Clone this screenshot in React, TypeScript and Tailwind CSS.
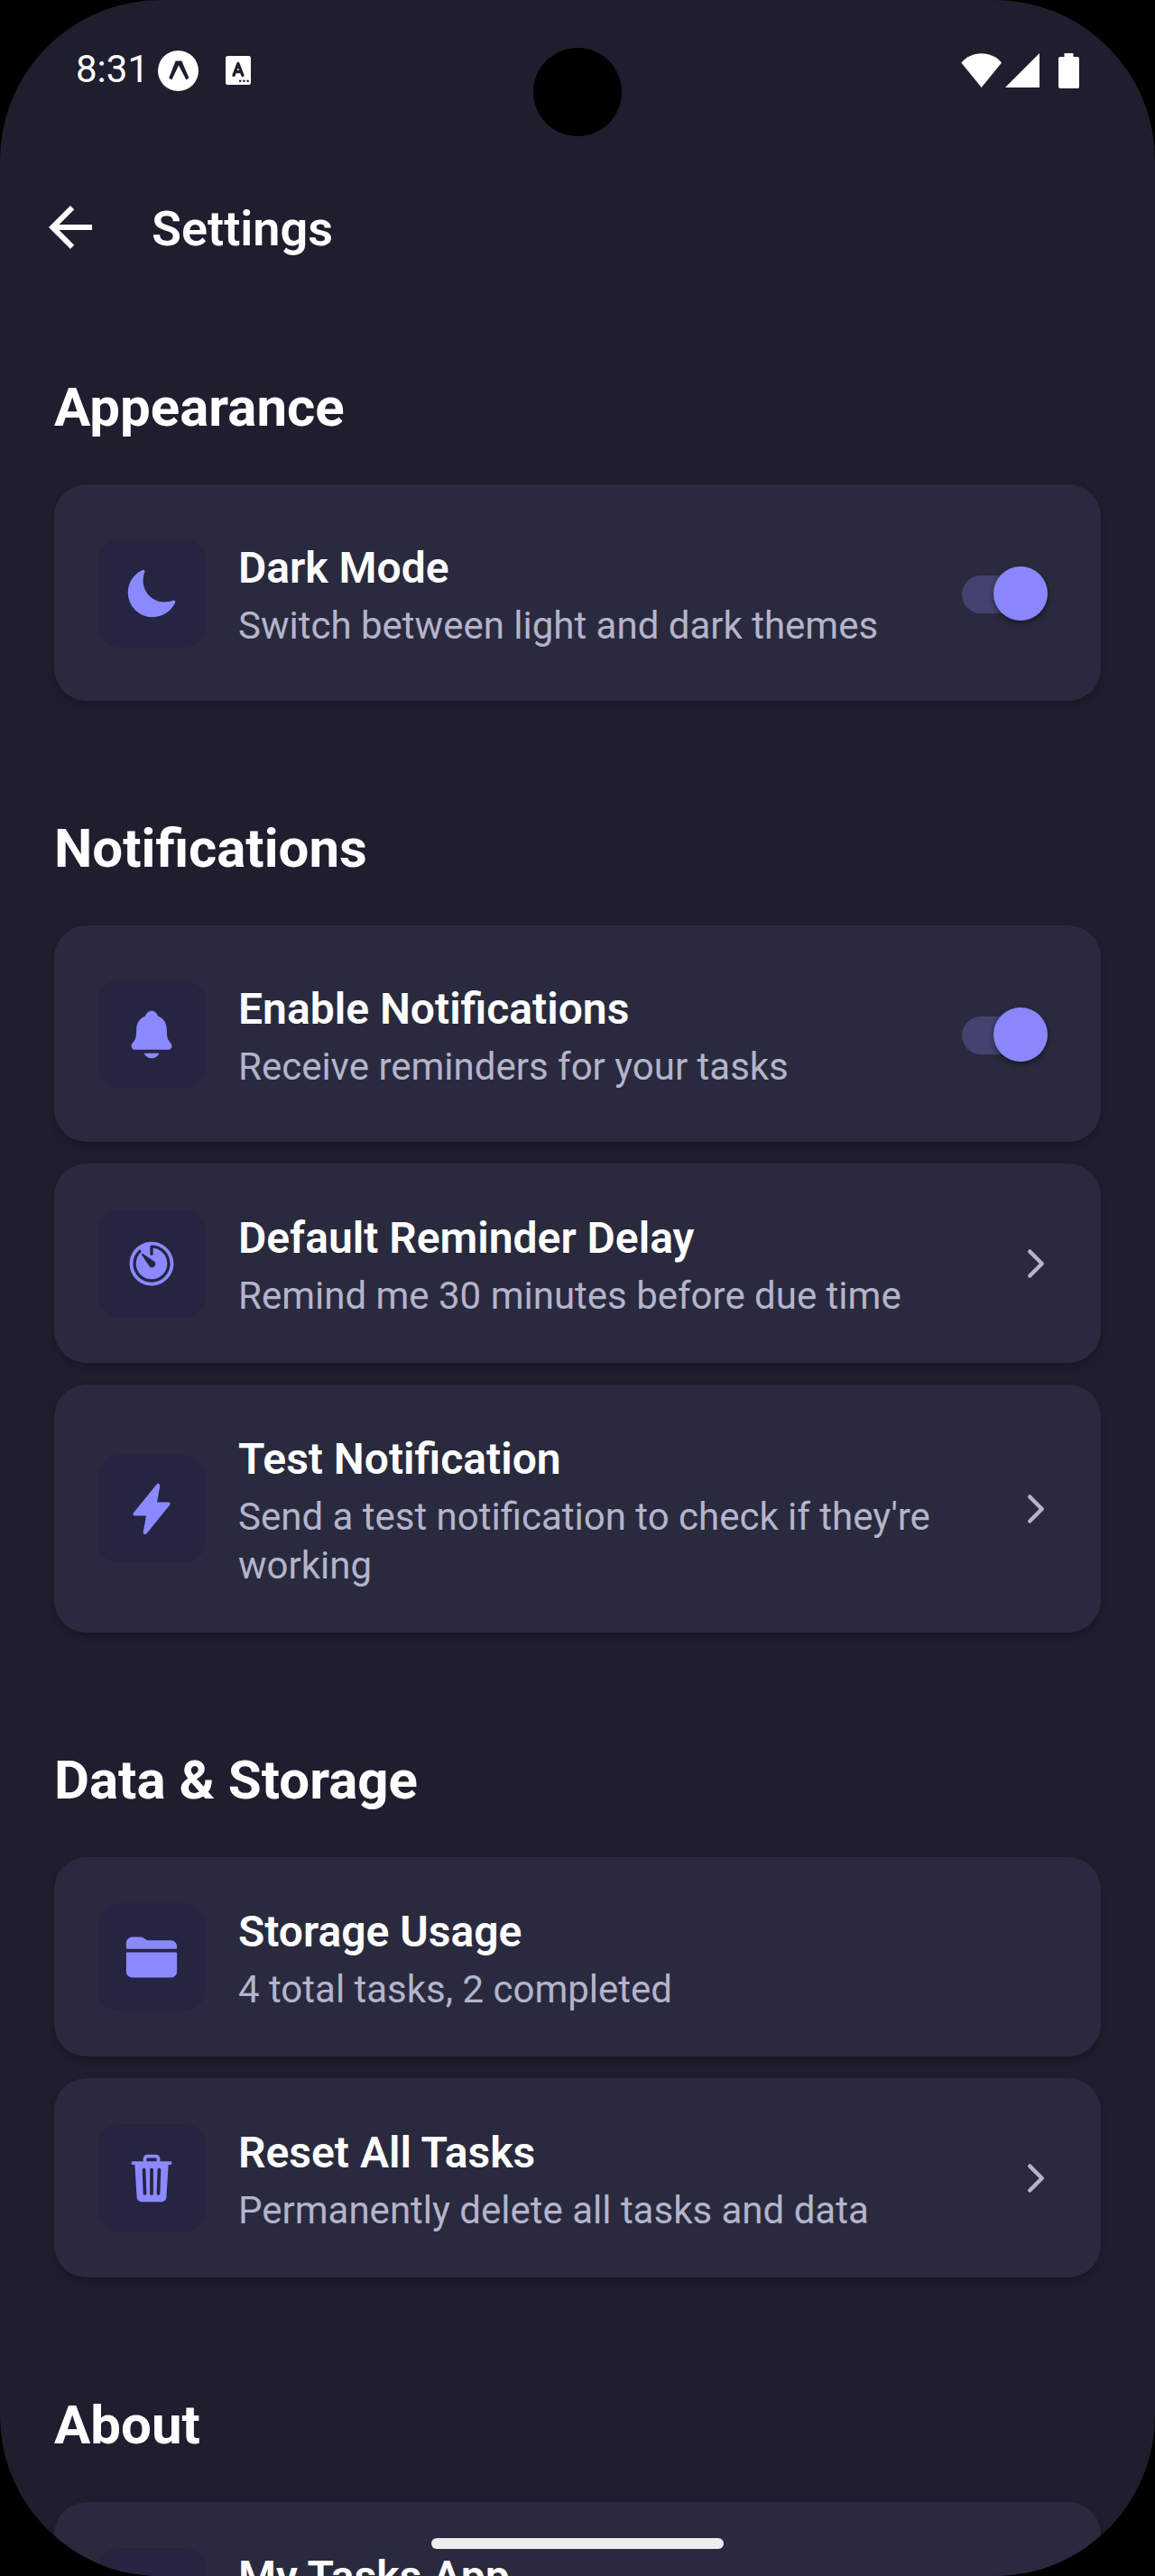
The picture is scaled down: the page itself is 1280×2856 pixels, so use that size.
import { useState, type ReactNode } from "react";
import {
  IoChevronForward,
  IoFlash,
  IoFolder,
  IoInformationCircle,
  IoMoon,
  IoNotifications,
  IoTimer,
  IoTrash,
} from "react-icons/io5";
import { MdArrowBack } from "react-icons/md";

const cardClass =
  "flex w-full items-center gap-9 rounded-[36px] bg-[#2a2a3e] px-12 pt-12 pb-[47px] text-left shadow-[0_4px_10px_rgba(0,0,0,0.25)]";

function RowBody({
  icon,
  title,
  description,
}: {
  icon: ReactNode;
  title: string;
  description?: string;
}) {
  return (
    <>
      <span className="flex size-[120px] shrink-0 items-center justify-center rounded-[24px] bg-[#252542] text-[60px] text-[#8b89ff]">
        {icon}
      </span>
      <span className="block min-h-[126px] min-w-0 flex-1">
        <span className="mb-[2px] block text-[48px] leading-[70px] font-semibold text-white">
          {title}
        </span>
        {description && (
          <span className="block text-[42px] leading-[54px] text-[#b4b4cc]">
            {description}
          </span>
        )}
      </span>
    </>
  );
}

function ToggleRow(props: { icon: ReactNode; title: string; description: string }) {
  const [on, setOn] = useState(true);
  return (
    <label className={`${cardClass} min-h-[240px] cursor-pointer`}>
      <RowBody {...props} />
      <input
        type="checkbox"
        role="switch"
        checked={on}
        onChange={() => setOn(!on)}
        className="relative mr-[10px] h-[60px] w-24 shrink-0 cursor-pointer appearance-none before:absolute before:top-[10px] before:left-0 before:h-[42px] before:w-[90px] before:rounded-full before:bg-[#44426f] after:absolute after:top-0 after:left-0 after:size-[60px] after:rounded-full after:bg-[#8b8b9e] after:shadow-[0_3px_6px_rgba(0,0,0,0.45)] checked:after:left-[35px] checked:after:bg-[#8987fb]"
      />
    </label>
  );
}

function LinkRow(props: { icon: ReactNode; title: string; description: string }) {
  return (
    <button type="button" className={cardClass}>
      <RowBody {...props} />
      <IoChevronForward className="size-12 shrink-0 text-[#b4b4cc]" />
    </button>
  );
}

function InfoRow(props: { icon: ReactNode; title: string; description?: string }) {
  return (
    <div className={cardClass}>
      <RowBody {...props} />
    </div>
  );
}

function Section({ title, children }: { title: string; children: ReactNode }) {
  return (
    <section>
      <h2 className="mb-[49px] text-[60px] leading-[72px] font-bold text-white">{title}</h2>
      <div className="flex flex-col gap-6">{children}</div>
    </section>
  );
}

function StatusBar() {
  return (
    <div className="flex h-[156px] shrink-0 items-center justify-between px-[84px] text-white">
      <div className="flex items-center">
        <span className="pb-0.5 text-[42px] leading-[50px]">8:31</span>
        <svg viewBox="0 0 45 45" className="ml-[10px] size-[45px]" aria-hidden="true">
          <circle cx="22.5" cy="22.5" r="22.5" fill="currentColor" />
          <path
            d="M19.6 11.6h6.8L34.4 30.4l-3 2L23 16.6 15.4 32.4l-3.200-2z"
            fill="#1f1e2e"
          />
        </svg>
        <svg viewBox="0 0 28 32" className="ml-[30px] h-8 w-7" aria-hidden="true">
          <rect width="28" height="32" rx="2.5" fill="currentColor" />
          <path
            d="M9 21.5 13.9 8.5 18.9 21.5M10.8 17.6h6.2"
            fill="none"
            stroke="#1f1e2e"
            strokeWidth="3.4"
            strokeLinecap="round"
            strokeLinejoin="round"
          />
          <g fill="#1f1e2e">
            <circle cx="16.2" cy="27.8" r="1.3" />
            <circle cx="20.4" cy="27.8" r="1.3" />
            <circle cx="24.6" cy="27.8" r="1.3" />
          </g>
        </svg>
      </div>
      <div className="flex items-center">
        <svg viewBox="0 0 46 38" className="h-[38px] w-[46px]" aria-hidden="true">
          <path d="M.3 10.5C6 4 14 .3 22.7.3S39.500 4 45 10.500L22.700 38z" fill="currentColor" />
        </svg>
        <svg viewBox="0 0 38 38" className="ml-[3px] size-[38px]" aria-hidden="true">
          <path d="M38 0v38H0z" fill="currentColor" />
        </svg>
        <svg viewBox="0 0 23 39" className="ml-[21px] h-[39px] w-[23px]" aria-hidden="true">
          <path
            d="M6.500 0h10v4H21a2 2 0 0 1 2 2v31a2 2 0 0 1-2 2H2a2 2 0 0 1-2-2V6a2 2 0 0 1 2-2h4.500z"
            fill="currentColor"
          />
        </svg>
      </div>
    </div>
  );
}

export default function App() {
  return (
    <div className="h-screen bg-black font-['Roboto',sans-serif]">
      <div className="relative flex h-full flex-col overflow-hidden rounded-[178px] bg-[#1f1e2e]">
        <StatusBar />
        <div className="absolute top-[53px] left-1/2 size-[98px] -translate-x-1/2 rounded-full bg-black" />
        <header className="flex h-48 shrink-0 items-center gap-[54px] px-[42px] text-white">
          <button type="button" aria-label="Go back">
            <MdArrowBack className="size-[72px]" />
          </button>
          <h1 className="pt-1 text-[54px] leading-[64px] font-semibold">Settings</h1>
        </header>
        <main className="flex min-h-0 flex-1 flex-col gap-32 overflow-y-auto px-[60px] pt-[68px] [scrollbar-width:none]">
          <Section title="Appearance">
            <ToggleRow
              icon={<IoMoon />}
              title="Dark Mode"
              description="Switch between light and dark themes"
            />
          </Section>
          <Section title="Notifications">
            <ToggleRow
              icon={<IoNotifications />}
              title="Enable Notifications"
              description="Receive reminders for your tasks"
            />
            <LinkRow
              icon={<IoTimer />}
              title="Default Reminder Delay"
              description="Remind me 30 minutes before due time"
            />
            <LinkRow
              icon={<IoFlash />}
              title="Test Notification"
              description="Send a test notification to check if they're working"
            />
          </Section>
          <Section title="Data & Storage">
            <InfoRow
              icon={<IoFolder />}
              title="Storage Usage"
              description="4 total tasks, 2 completed"
            />
            <LinkRow
              icon={<IoTrash />}
              title="Reset All Tasks"
              description="Permanently delete all tasks and data"
            />
          </Section>
          <Section title="About">
            <InfoRow icon={<IoInformationCircle />} title="My Tasks App" />
          </Section>
        </main>
        <div className="absolute bottom-[30px] left-1/2 h-3 w-[324px] -translate-x-1/2 rounded-full bg-[#ededf0]" />
      </div>
    </div>
  );
}
